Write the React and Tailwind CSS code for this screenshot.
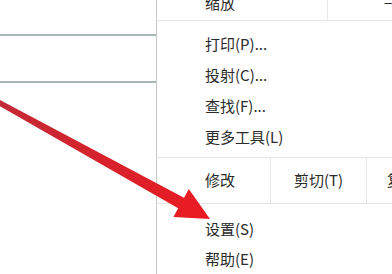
export default function App() {
  const items = ['打印(P)...', '投射(C)...', '查找(F)...', '更多工具(L)'];

  return (
    <div className="relative w-[392px] h-[274px] overflow-hidden bg-white flex font-['Noto_Sans_CJK_SC','Liberation_Sans',sans-serif] text-[15px] text-[#2b2b2b]">
      {/* page behind the menu */}
      <div className="w-[156px] shrink-0 flex flex-col pt-[34px]">
        <div className="h-[2px] bg-[#a9b7b7]" />
        <div className="h-[2px] bg-[#a9b7b7] mt-[45px]" />
      </div>

      {/* browser menu */}
      <div className="flex-1 flex flex-col border-l border-[#c9c9c9]">
        <div className="flex mt-[-14px] h-[35px] border-b border-[#e6e6e6]">
          <div className="w-[171px] flex items-center pl-[48px] border-r border-[#e6e6e6]">缩放</div>
          <div className="flex-1 flex items-center pl-[56px]">−</div>
        </div>

        <div className="flex flex-col pt-[8px] pb-[4px] border-b border-[#e6e6e6]">
          {items.map((label) => (
            <div key={label} className="h-[31px] flex items-center pl-[48px]">
              {label}
            </div>
          ))}
        </div>

        <div className="flex h-[46px] border-b border-[#e6e6e6]">
          <div className="w-[114px] flex items-center pl-[48px] border-r border-[#e6e6e6]">修改</div>
          <div className="w-[96px] flex items-center justify-center border-r border-[#e6e6e6]">剪切(T)</div>
          <div className="flex-1 flex items-center pl-[20px] whitespace-nowrap">复制(C)</div>
        </div>

        <div className="flex flex-col pt-[10px]">
          <div className="h-[30px] flex items-center pl-[48px]">设置(S)</div>
          <div className="h-[30px] flex items-center pl-[48px]">帮助(E)</div>
        </div>
      </div>

      {/* red annotation arrow */}
      <svg className="absolute inset-0 pointer-events-none" width="392" height="274" viewBox="0 0 392 274">
        <defs>
          <linearGradient id="arrowRed" x1="0" y1="100" x2="210" y2="219" gradientUnits="userSpaceOnUse">
            <stop offset="0" stopColor="#c22a36" />
            <stop offset="1" stopColor="#ec1a22" />
          </linearGradient>
        </defs>
        <polygon
          points="-7.5,96 184,197.75 188.8,189 210,219 173.4,217 178.2,208.25 -10,100.4"
          fill="url(#arrowRed)"
        />
      </svg>
    </div>
  );
}
